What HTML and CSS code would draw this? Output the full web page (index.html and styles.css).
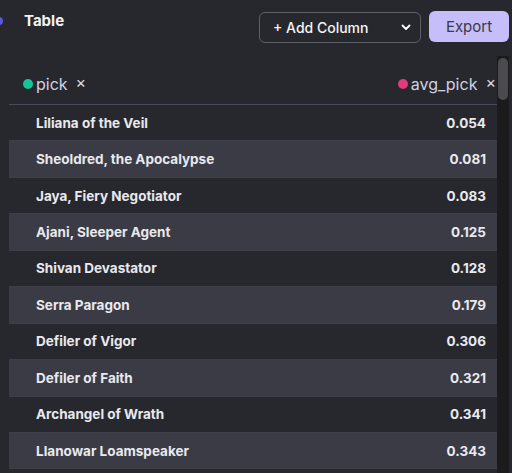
FILE: index.html
```html
<!DOCTYPE html>
<html>
<head>
<meta charset="utf-8">
<link rel="stylesheet" href="styles.css">
</head>
<body>
<div class="panel">
  <div class="topbar">
    <span class="edge-dot"></span>
    <h1 class="title">Table</h1>
    <div class="controls">
      <div class="select">
        <span>+ Add Column</span>
        <svg class="chev" width="10" height="7" viewBox="0 0 10 7"><path d="M1.5 1.5 L5 5 L8.5 1.5" fill="none" stroke="#fff" stroke-width="1.8" stroke-linecap="round" stroke-linejoin="round"/></svg>
      </div>
      <button class="export">Export</button>
    </div>
  </div>
  <div class="scroller">
    <div class="table">
      <div class="head">
        <div class="col-tag"><span class="dot green"></span><span class="col-name">pick</span><span class="x">×</span></div>
        <div class="col-tag"><span class="dot pink"></span><span class="col-name">avg_pick</span><span class="x">×</span></div>
      </div>
      <div class="row"><span>Liliana of the Veil</span><span>0.054</span></div>
      <div class="row alt"><span>Sheoldred, the Apocalypse</span><span>0.081</span></div>
      <div class="row"><span>Jaya, Fiery Negotiator</span><span>0.083</span></div>
      <div class="row alt"><span>Ajani, Sleeper Agent</span><span>0.125</span></div>
      <div class="row"><span>Shivan Devastator</span><span>0.128</span></div>
      <div class="row alt"><span>Serra Paragon</span><span>0.179</span></div>
      <div class="row"><span>Defiler of Vigor</span><span>0.306</span></div>
      <div class="row alt"><span>Defiler of Faith</span><span>0.321</span></div>
      <div class="row"><span>Archangel of Wrath</span><span>0.341</span></div>
      <div class="row alt"><span>Llanowar Loamspeaker</span><span>0.343</span></div>
    </div>
    <div class="track"><div class="thumb"></div></div>
  </div>
</div>
</body>
</html>
```
FILE: styles.css
```css
html, body {
  margin: 0;
  padding: 0;
  background: #27282d;
  height: 100%;
  overflow: hidden;
}
.panel {
  font-family: Inter, "Noto Sans", sans-serif;
  color: #ececf0;
  height: 473px;
  display: flex;
  flex-direction: column;
}
.topbar {
  display: flex;
  align-items: flex-start;
  height: 56px;
  box-sizing: border-box;
  padding-top: 11px;
}
.edge-dot {
  width: 8px;
  height: 8px;
  border-radius: 50%;
  background: #5a57e0;
  margin-left: -5px;
  margin-top: 6px;
  flex: none;
}
.title {
  margin: 1px 0 0 21px;
  font-size: 15px;
  font-weight: 700;
  line-height: 18px;
  color: #f2f2f4;
}
.controls {
  margin-left: auto;
  margin-right: 3px;
  display: flex;
  gap: 8px;
  align-items: flex-start;
}
.select {
  width: 162px;
  height: 31px;
  box-sizing: border-box;
  margin-top: 1px;
  border: 1px solid #5f5f66;
  border-radius: 6px;
  display: flex;
  align-items: center;
  justify-content: space-between;
  padding: 0 9px 1px 13px;
  font-size: 14px;
  font-weight: 500;
  color: #f4f4f6;
}
.chev { display: block; }
.export {
  width: 80px;
  height: 31px;
  border: none;
  border-radius: 6px;
  background: #c5befa;
  color: #393944;
  font-family: Inter, "Noto Sans", sans-serif;
  font-size: 15px;
  padding: 0;
}
.scroller {
  flex: 1;
  display: flex;
  min-height: 0;
  overflow: hidden;
}
.table {
  flex: 1;
  margin-left: 9px;
}
.track {
  width: 12px;
  background: #1b1b1e;
  margin-right: 3px;
  padding-top: 2px;
  box-sizing: border-box;
}
.thumb {
  width: 10px;
  margin: 0 auto;
  height: 42px;
  border-radius: 5px;
  background: #4a4a4f;
}
.head {
  height: 49px;
  box-sizing: border-box;
  border-bottom: 1px solid #4a4a5c;
  display: flex;
  justify-content: space-between;
  align-items: flex-end;
  padding: 0 1px 10px 14px;
}
.col-tag {
  display: flex;
  align-items: center;
  font-size: 16px;
  color: #cfd1e6;
  line-height: 20px;
}
.dot {
  width: 10px;
  height: 10px;
  border-radius: 50%;
  margin-right: 3px;
}
.green { background: #17c39a; }
.pink { background: #e23a7c; }
.x {
  font-size: 16px;
  margin-left: 8px;
  margin-top: -5px;
  color: #dcdde8;
}
.row {
  height: 36.45px;
  box-sizing: border-box;
  border-bottom: 1px solid #3d3e48;
  display: flex;
  align-items: center;
  justify-content: space-between;
  padding: 0 11px 0 27px;
  font-size: 13.5px;
  font-weight: 700;
  color: #e9e9ee;
}
.row.alt { background: #3a3b45; }
```
